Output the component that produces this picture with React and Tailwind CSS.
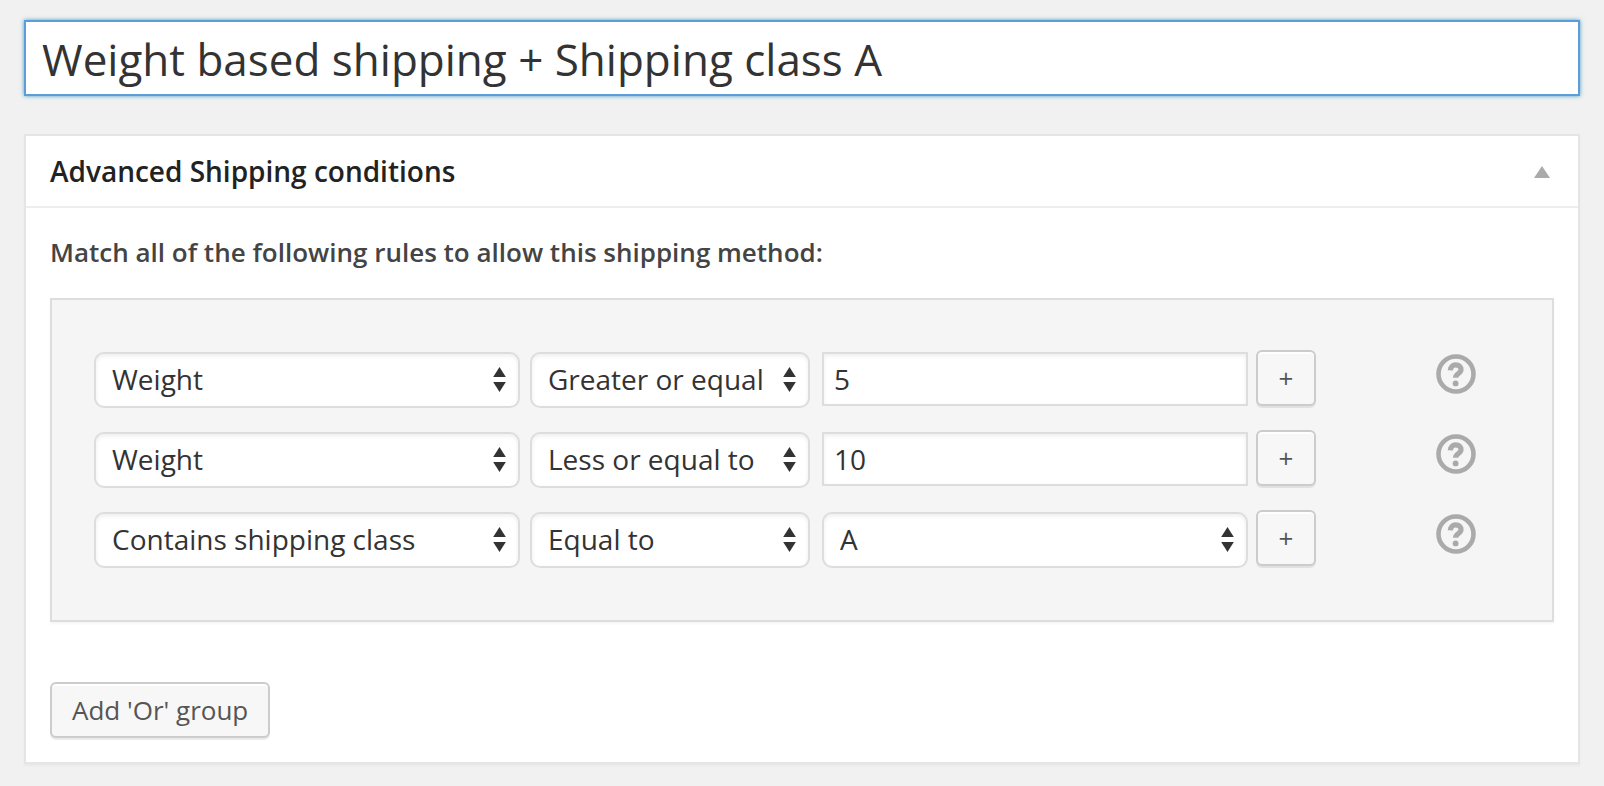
import { useState } from 'react'
import clsx from 'clsx'

const CONDITIONS = ['Weight', 'Contains shipping class']
const OPERATORS = ['Equal to', 'Greater or equal', 'Less or equal to']
const CLASSES = ['A', 'B']

const SEED = [
  { id: 'c1', condition: 'Weight', operator: 'Greater or equal', value: '5' },
  { id: 'c2', condition: 'Weight', operator: 'Less or equal to', value: '10' },
  { id: 'c3', condition: 'Contains shipping class', operator: 'Equal to', value: 'A' },
]

const BUTTON = 'h-14 rounded-md border-2 border-[#ccc] bg-[#f7f7f7] text-[26px] leading-[52px] text-[#555] shadow-[inset_0_2px_0_#fff,0_2px_0_rgba(0,0,0,0.08)]'

function Select({ label, options, value, onChange, className }) {
  return (
    <div className={clsx('relative mt-0.5 min-w-0 basis-0', className)}>
      <select
        aria-label={label}
        value={value}
        onChange={e => onChange(e.target.value)}
        className="block h-14 w-full appearance-none rounded-[10px] border-2 border-[#ddd] bg-white pr-10 pb-0.5 pl-4 text-[28px] leading-[50px] text-[#333] shadow-[inset_0_2px_4px_rgba(0,0,0,0.07)] outline-none"
      >
        {options.map(o => <option key={o}>{o}</option>)}
      </select>
      <svg className="pointer-events-none absolute top-[15px] right-3.5 h-[25px] w-[13px]" viewBox="0 0 13 25" fill="#333">
        <path d="M6.5 0 12.8 10H.2z" />
        <path d="M.2 15h12.6L6.5 25z" />
      </svg>
    </div>
  )
}

function HelpIcon() {
  return (
    <svg className="size-10" viewBox="0 0 40 40" fill="none" stroke="#aaa">
      <circle cx="20" cy="20" r="17.5" strokeWidth="4.6" />
      <path d="M14.3 16.4c.2-3.6 2.4-5.5 5.4-5.5 3.2 0 5.3 2 5.3 4.8 0 3.8-5.4 3.9-5.4 8" strokeWidth="5.2" />
      <circle cx="19.6" cy="29.4" r="2.9" fill="#aaa" stroke="none" />
    </svg>
  )
}

export default function App() {
  const [title, setTitle] = useState('Weight based shipping + Shipping class A')
  const [rows, setRows] = useState(SEED)
  const [open, setOpen] = useState(true)

  function update(id, patch) {
    setRows(prev => prev.map(r => r.id === id ? { ...r, ...patch } : r))
  }
  function addRow() {
    setRows(prev => [...prev, { id: `c${Date.now()}`, condition: 'Weight', operator: 'Equal to', value: '' }])
  }

  return (
    <div className="min-h-screen bg-[#f1f1f1] px-6 pt-5 pb-[22px] font-['Open_Sans',sans-serif] text-[#444]">
      <input
        aria-label="Title"
        value={title}
        onChange={e => setTitle(e.target.value)}
        className="block h-19 w-full border-2 border-[#5b9dd9] bg-white px-4 pt-0.5 text-[44px] text-[#333] shadow-[0_0_4px_rgba(30,140,190,0.8)] outline-none"
      />

      <section className="mt-[38px] border-2 border-[#e5e5e5] bg-white shadow-[0_2px_2px_rgba(0,0,0,0.04)]">
        <div className="flex h-[72px] items-center justify-between border-b-2 border-[#eee] pr-7 pl-6">
          <h2 className="text-[28px] leading-10 font-semibold text-[#222]">Advanced Shipping conditions</h2>
          <button aria-label="Toggle panel" aria-expanded={open} onClick={() => setOpen(!open)} className="pt-0.5">
            <svg className="h-3 w-4" viewBox="0 0 16 12" fill="#aaa"><path d="M8 0l8 12H0z" /></svg>
          </button>
        </div>

        {open && (
          <div className="p-6">
            <p className="text-[26px] leading-10 font-semibold">Match all of the following rules to allow this shipping method:</p>

            <div className="mt-[26px] flex flex-col gap-[22px] border-2 border-[#ddd] bg-[#f5f5f5] pt-[50px] pr-[76px] pb-[52px] pl-[42px] shadow-[0_2px_2px_rgba(0,0,0,0.04)]">
              {rows.map(r => (
                <div key={r.id} className="flex h-[58px] items-start">
                  <Select label="Condition" options={CONDITIONS} value={r.condition} onChange={v => update(r.id, { condition: v })} className="mr-2.5 grow-[426]" />
                  <Select label="Operator" options={OPERATORS} value={r.operator} onChange={v => update(r.id, { operator: v })} className="mr-3 grow-[280]" />
                  {r.condition === 'Contains shipping class' ? (
                    <Select label="Value" options={CLASSES} value={r.value} onChange={v => update(r.id, { value: v })} className="mr-2 grow-[426]" />
                  ) : (
                    <div className="mt-0.5 mr-2 min-w-0 grow-[426] basis-0">
                      <input
                        aria-label="Value"
                        value={r.value}
                        onChange={e => update(r.id, { value: e.target.value })}
                        className="block h-[54px] w-full border-2 border-[#ddd] bg-white px-2.5 text-[28px] text-[#333] shadow-[inset_0_2px_4px_rgba(0,0,0,0.07)] outline-none"
                      />
                    </div>
                  )}
                  <button aria-label="Add condition" onClick={addRow} className={clsx(BUTTON, 'w-15 shrink-0')}>+</button>
                  <span className="mt-1 ml-[120px] shrink-0"><HelpIcon /></span>
                </div>
              ))}
            </div>

            <button className={clsx(BUTTON, 'mt-15 block px-5')}>Add 'Or' group</button>
          </div>
        )}
      </section>
    </div>
  )
}
